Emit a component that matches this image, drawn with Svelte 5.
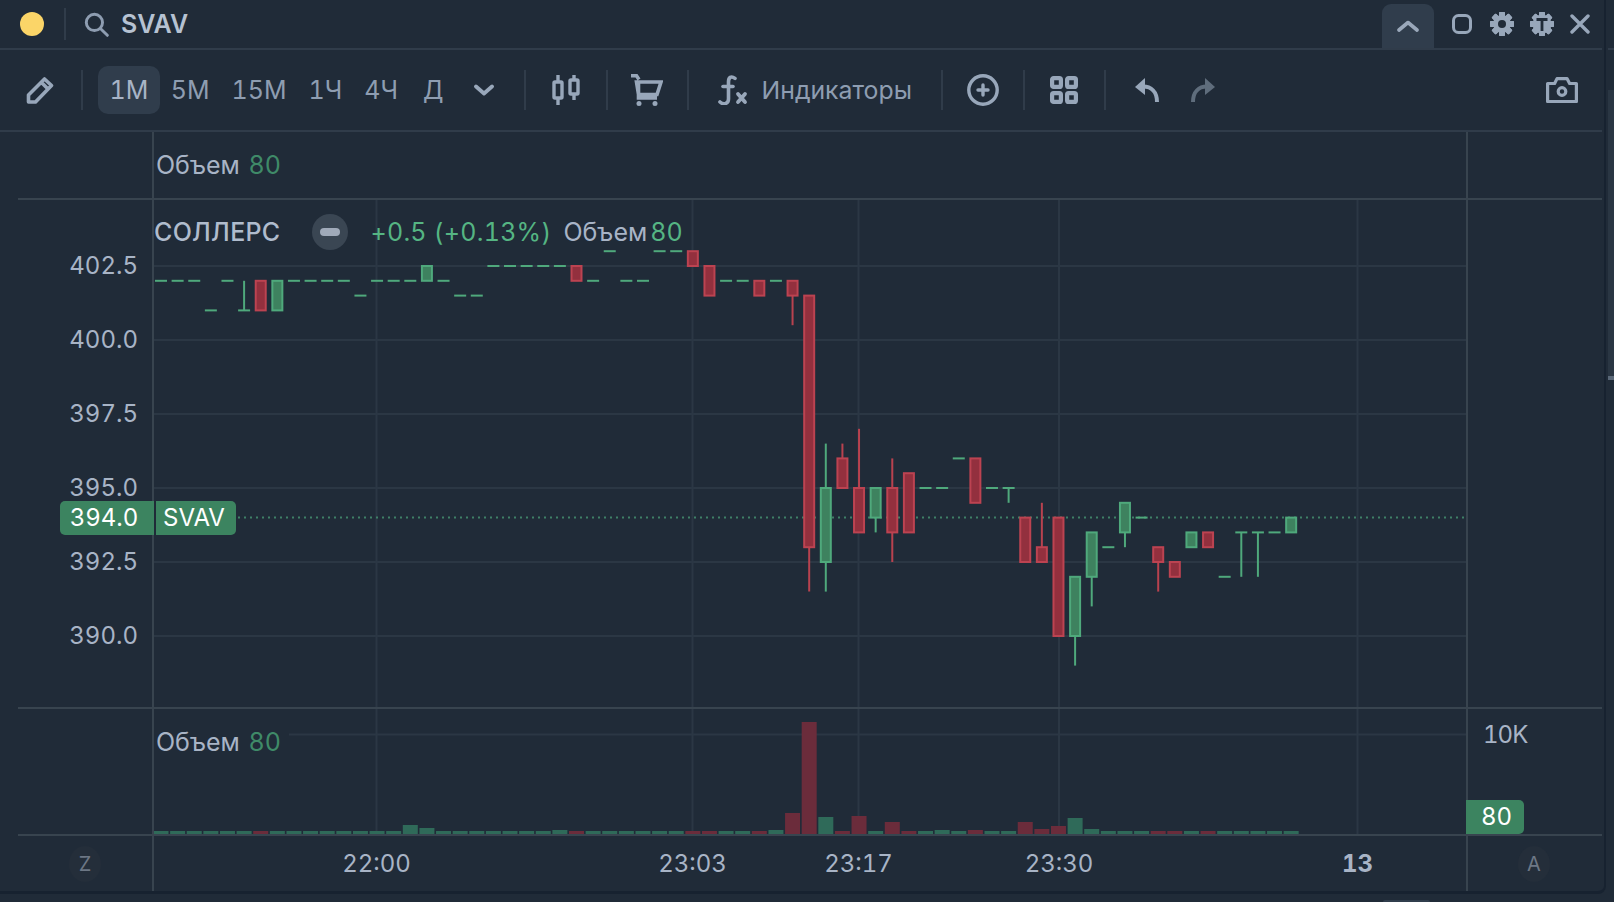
<script lang="ts">
	const TF = ['5М', '15М', '1Ч', '4Ч', 'Д'];

	// price scale: 395 sits on y=488 of the page, main pane starts at 200
	const PANE_TOP = 200;
	const yOf = (p: number) => 488 + (395 - p) * 29.6 - PANE_TOP;
	const xOf = (k: number) => 7 + k * 16.62;

	const gridPrices = [402.5, 400, 397.5, 395, 392.5, 390];
	const gridTimes = [
		{ x: 222.5, label: '22:00' },
		{ x: 538.5, label: '23:03' },
		{ x: 704.5, label: '23:17' },
		{ x: 905, label: '23:30' },
		{ x: 1203.5, label: '13', bold: true }
	];

	// [index, open, close, high, low]; open == close is a dash
	const candles: number[][] = [
		[0, 402, 402], [1, 402, 402], [2, 402, 402], [3, 401, 401], [4, 402, 402],
		[5, 401, 401, 402, 401], [6, 402, 401], [7, 401, 402], [8, 402, 402], [9, 402, 402],
		[10, 402, 402], [11, 402, 402], [12, 401.5, 401.5], [13, 402, 402], [14, 402, 402],
		[15, 402, 402], [16, 402, 402.5], [17, 402, 402], [18, 401.5, 401.5], [19, 401.5, 401.5],
		[20, 402.5, 402.5], [21, 402.5, 402.5], [22, 402.5, 402.5], [23, 402.5, 402.5], [24, 402.5, 402.5],
		[25, 402.5, 402], [26, 402, 402], [27, 403, 403], [28, 402, 402], [29, 402, 402],
		[30, 403, 403], [31, 403, 403], [32, 403, 402.5], [33, 402.5, 401.5], [34, 402, 402],
		[35, 402, 402], [36, 402, 401.5], [37, 402, 402], [38, 402, 401.5, 402, 400.5],
		[39, 401.5, 393, 401.5, 391.5], [40, 392.5, 395, 396.5, 391.5], [41, 396, 395, 396.5, 395],
		[42, 395, 393.5, 397, 393.5], [43, 394, 395, 395, 393.5], [44, 395, 393.5, 396, 392.5],
		[45, 395.5, 393.5], [46, 395, 395], [47, 395, 395], [48, 396, 396], [49, 396, 394.5],
		[50, 395, 395], [51, 395, 395, 395, 394.5], [52, 394, 392.5], [53, 393, 392.5, 394.5, 392.5],
		[54, 394, 390], [55, 390, 392, 392, 389], [56, 392, 393.5, 393.5, 391], [57, 393, 393],
		[58, 393.5, 394.5, 394.5, 393], [59, 394, 394], [60, 393, 392.5, 393, 391.5], [61, 392.5, 392],
		[62, 393, 393.5], [63, 393.5, 393], [64, 392, 392], [65, 393.5, 393.5, 393.5, 392],
		[66, 393.5, 393.5, 393.5, 392], [67, 393.5, 393.5], [68, 393.5, 394]
	];

	// volume bar tops, page y; everything else is the short stub
	const volTops: Record<number, number> = {
		15: 825, 16: 828, 24: 830, 37: 830, 38: 813, 39: 722, 40: 817, 41: 831, 42: 816, 44: 822,
		47: 830, 49: 830, 52: 822, 53: 829, 54: 826, 55: 818, 56: 829
	};
	const volRed = [6, 25, 32, 33, 36, 38, 39, 41, 42, 44, 45, 49, 52, 53, 54, 60, 61, 63];
	const VOL_BASE = 834;
	const VOL_TOP = 709;
	const volumes = Array.from({ length: 69 }, (_, k) => {
		const top = volTops[k] ?? 831;
		return { x: xOf(k) - 7.5, y: top - VOL_TOP, h: VOL_BASE - top, red: volRed.includes(k) };
	});

	const teeth = [0, 45, 90, 135, 180, 225, 270, 315];
</script>

<div class="panel">
	<header class="topbar">
		<span class="dot"></span>
		<span class="vsep"></span>
		<svg class="search" viewBox="0 0 24 24" width="25" height="25" fill="none" stroke="#8e9db1" stroke-width="2.8" stroke-linecap="round">
			<circle cx="10" cy="10" r="7.8" />
			<path d="M16 16l6.4 6.4" />
		</svg>
		<span class="ticker">SVAV</span>
		<span class="collapse">
			<svg viewBox="0 0 22 12" width="22" height="12" fill="none" stroke="#9aa8ba" stroke-width="3.6" stroke-linecap="round" stroke-linejoin="round"><path d="M2 10l9-7.5L20 10" /></svg>
		</span>
		<svg class="square" viewBox="0 0 20 20" width="20" height="20" fill="none" stroke="#98a7ba" stroke-width="3"><rect x="1.5" y="1.500" width="17" height="17" rx="5" /></svg>
		<svg class="gear" viewBox="0 0 24 24" width="24" height="24">
			{#each teeth as a}
				<rect x="9" y="0" width="6" height="24" rx="1" fill="#98a7ba" transform="rotate({a} 12 12)" />
			{/each}
			<circle cx="12" cy="12" r="6.400" fill="none" stroke="#98a7ba" stroke-width="5" />
			<circle cx="12" cy="12" r="4" fill="#202b38" />
		</svg>
		<svg class="bug" viewBox="0 0 24 24" width="24" height="24">
			{#each teeth as a}
				<rect x="9" y="0" width="6" height="24" rx="1" fill="#98a7ba" transform="rotate({a} 12 12)" />
			{/each}
			<circle cx="12" cy="12" r="9.500" fill="#98a7ba" />
			<path d="M6.500 7.500h11M12 7.500V19" fill="none" stroke="#202b38" stroke-width="2.800" />
		</svg>
		<svg class="close" viewBox="0 0 20 20" width="20" height="20" fill="none" stroke="#98a7ba" stroke-width="3.4" stroke-linecap="round"><path d="M2 2l16 16M18 2L2 18" /></svg>
	</header>

	<nav class="toolbar">
		<svg class="pencil" viewBox="0 0 28 28" width="28" height="28" fill="none" stroke="#98a7ba" stroke-width="3.600" stroke-linejoin="round"><path d="M2.500 26v-7L18.500 3l7 6.500L9.500 26zM15.500 6.500l6.500 6.500" /></svg>
		<span class="vsep tall s1"></span>
		<button class="tf active">1М</button>
		{#each TF as t}
			<button class="tf">{t}</button>
		{/each}
		<svg class="chev" viewBox="0 0 20 12" width="20" height="12" fill="none" stroke="#98a7ba" stroke-width="3.800" stroke-linecap="round" stroke-linejoin="round"><path d="M2 2.500l8 7 8-7" /></svg>
		<span class="vsep tall s2"></span>
		<svg class="cndl" viewBox="0 0 28 30" width="28" height="30" fill="none" stroke="#98a7ba" stroke-width="3.400"><path d="M6 0v7M6 23v7M22 0v5M22 19v6" /><rect x="2" y="7" width="8" height="16" rx="1" /><rect x="18" y="5" width="8" height="14" rx="1" /></svg>
		<span class="vsep tall s3"></span>
		<svg class="cart" viewBox="0 0 32 32" width="32" height="32" fill="none" stroke="#98a7ba" stroke-width="3.600"><path d="M0 1.800h5.500L8 5.500M5.500 8H30l-4 12.500H7.500zM7.500 8v16H26" /><circle cx="8" cy="29.500" r="2.500" fill="#98a7ba" stroke="none" /><circle cx="24" cy="29.500" r="2.500" fill="#98a7ba" stroke="none" /></svg>
		<span class="vsep tall s4"></span>
		<svg class="fx" viewBox="0 0 30 30" width="30" height="30" fill="none" stroke="#98a7ba" stroke-width="3.600" stroke-linecap="round"><path d="M17 3.400C13 .4 10.500 2.500 10.500 7v17c0 4.400-4.500 6.500-8.500 3" /><path d="M5 11.500h10" /><path d="M20 19l7 8M27 19l-7 8" stroke-width="3.800" /></svg>
		<span class="indicators">Индикаторы</span>
		<span class="vsep tall s5"></span>
		<svg class="plus" viewBox="0 0 32 32" width="32" height="32" fill="none" stroke="#98a7ba" stroke-width="3.400"><circle cx="16" cy="16" r="14.200" /><path d="M16 11v10M11 16h10" stroke-linecap="round" /></svg>
		<span class="vsep tall s6"></span>
		<svg class="tiles" viewBox="0 0 28 28" width="28" height="28" fill="none" stroke="#98a7ba" stroke-width="4.200"><rect x="2.100" y="2.100" width="8.800" height="8.800" rx="1.500" /><rect x="17.100" y="2.100" width="8.800" height="8.800" rx="1.500" /><rect x="2.100" y="17.100" width="8.800" height="8.800" rx="1.500" /><rect x="17.100" y="17.100" width="8.800" height="8.800" rx="1.500" /></svg>
		<span class="vsep tall s7"></span>
		<svg class="undo" viewBox="0 0 24 24" width="24" height="24"><path d="M10 0L0 9l10 8z" fill="#98a7ba" /><path d="M8 8.500c8 0 14 5 14 15.500" fill="none" stroke="#98a7ba" stroke-width="4" /></svg>
		<svg class="redo" viewBox="0 0 24 24" width="24" height="24"><path d="M14 0l10 9-10 8z" fill="#5f6d7c" /><path d="M16 8.500c-8 0-14 5-14 15.500" fill="none" stroke="#5f6d7c" stroke-width="4" /></svg>
		<svg class="camera" viewBox="0 0 32 26" width="32" height="26" fill="none" stroke="#98a7ba" stroke-width="3.200" stroke-linejoin="round"><path d="M1.600 6.500h7L11 1.600h10l2.600 4.900h6.800v18H1.600z" /><circle cx="16" cy="14.500" r="3.800" /></svg>
	</nav>

	<section class="pane head">
		<div class="side"></div>
		<div class="legend"><span>Объем</span> <em class="dim">80</em></div>
	</section>

	<section class="pane main">
		<div class="side">
			{#each gridPrices as p}
				<span class="price" style="top:{yOf(p)}px">{p.toFixed(1)}</span>
			{/each}
		</div>
		<div class="plot">
			<svg class="canvas" width="1312" height="507">
				{#each gridPrices as p}
					<line class="grid" x1="0" x2="1312" y1={yOf(p)} y2={yOf(p)} />
				{/each}
				{#each gridTimes as t}
					<line class="grid" x1={t.x} x2={t.x} y1="0" y2="507" />
				{/each}
				<line class="last" x1="84" x2="1310" y1={yOf(394)} y2={yOf(394)} />
				{#each candles as c}
					{@const up = c[2] >= c[1]}
					{@const x = xOf(c[0])}
					{#if c.length > 3}
						<line class={up ? 'wick up' : 'wick down'} x1={x} x2={x} y1={yOf(c[3])} y2={yOf(c[4])} />
					{/if}
					{#if c[1] === c[2]}
						<line class="dash" x1={x - 6} x2={x + 6} y1={yOf(c[1])} y2={yOf(c[1])} />
					{:else}
						<rect
							class={up ? 'body up' : 'body down'}
							x={x - 5}
							y={yOf(Math.max(c[1], c[2]))}
							width="10"
							height={yOf(Math.min(c[1], c[2])) - yOf(Math.max(c[1], c[2]))}
						/>
					{/if}
				{/each}
			</svg>
			<div class="legend main-legend">
				<span class="name">СОЛЛЕРС</span>
				<span class="minus"><i></i></span>
				<span class="change">+0.5 (+0.13%)</span>
				<span class="vol">Объем</span>
				<em>80</em>
			</div>
			<span class="symtag">SVAV</span>
		</div>
		<span class="pricetag">394.0</span>
	</section>

	<section class="pane volume">
		<div class="side"></div>
		<div class="plot">
			<svg class="canvas" width="1312" height="125">
				<line class="grid" x1="0" x2="1312" y1="25.500" y2="25.500" />
				{#each gridTimes as t}
					<line class="grid" x1={t.x} x2={t.x} y1="0" y2="125" />
				{/each}
				{#each volumes as v}
					<rect class={v.red ? 'bar red' : 'bar green'} x={v.x} y={v.y} width="15" height={v.h} />
				{/each}
			</svg>
			<div class="legend vol-legend"><span>Объем</span> <em class="dim">80</em></div>
		</div>
		<div class="scale">
			<span class="tenk">10K</span>
			<span class="voltag">80</span>
		</div>
	</section>

	<footer class="axis">
		<div class="corner"><span class="mode">Z</span></div>
		<div class="times">
			{#each gridTimes as t}
				<span class:bold={t.bold} style="left:{t.x}px">{t.label}</span>
			{/each}
		</div>
		<div class="corner right"><span class="mode">A</span></div>
	</footer>
</div>

<!-- neighbouring panel peeking in at the right and bottom edges -->
<div class="edge">
	<i class="e-top"></i>
	<i class="e-mid"></i>
	<i class="e-bar"></i>
</div>
<span class="peek"></span>

<style>
	:global(body) {
		margin: 0;
		background: #202b38;
		overflow: hidden;
	}

	.panel {
		width: 1606px;
		height: 894px;
		box-sizing: border-box;
		border-right: 2px solid #172230;
		border-bottom: 3px solid #172230;
		border-bottom-right-radius: 8px;
		font-family: Inter, 'Noto Sans', sans-serif;
		font-variant-numeric: tabular-nums;
		color: #a8b4c6;
		display: flex;
		flex-direction: column;
	}

	.topbar {
		height: 48px;
		flex: none;
		margin-right: 2px;
		border-bottom: 2px solid #303c4a;
		display: flex;
		align-items: center;
	}

	.dot {
		width: 24px;
		height: 24px;
		border-radius: 50%;
		background: #fbd568;
		margin-left: 20px;
	}

	.vsep {
		width: 2px;
		height: 32px;
		background: #303c4a;
		margin-left: 20px;
		flex: none;
	}

	.search {
		margin-left: 18px;
	}

	.ticker {
		margin-left: 12px;
		font-size: 25px;
		font-weight: 600;
		color: #b6c2d2;
	}

	.collapse {
		margin-left: auto;
		width: 52px;
		height: 44px;
		margin-top: 4px;
		background: #303d4c;
		border-radius: 9px 9px 0 0;
		display: flex;
		align-items: center;
		justify-content: center;
	}

	.square { margin-left: 18px; }
	.gear { margin-left: 18px; }
	.bug { margin-left: 16px; }
	.close { margin-left: 16px; margin-right: 12px; }

	.toolbar {
		height: 80px;
		flex: none;
		margin-right: 2px;
		border-bottom: 2px solid #303c4a;
		display: flex;
		align-items: center;
		color: #8e9db1;
	}

	.tall {
		height: 40px;
		margin-left: 0;
	}

	.pencil { margin-left: 26px; }
	.s1 { margin-left: 27px; }

	.tf {
		all: unset;
		font-size: 25px;
		height: 48px;
		line-height: 48px;
		padding: 0 11px;
		border-radius: 10px;
		color: #8e9db1;
	}

	.tf.active {
		background: #303d4c;
		color: #a8b4c6;
		margin-left: 15px;
		padding: 0 11.5px;
	}

	.tf:last-of-type {
		margin-left: 3px;
	}

	.chev { margin-left: 19px; }
	.s2 { margin-left: 30px; }
	.cndl { margin-left: 26px; }
	.s3 { margin-left: 26px; }
	.cart { margin-left: 23px; }
	.s4 { margin-left: 24px; }
	.fx { margin-left: 29px; }

	.indicators {
		margin-left: 14px;
		font-size: 24.8px;
		width: 179px;
	}

	.s5 { margin-left: 0; }
	.plus { margin-left: 24px; }
	.s6 { margin-left: 24px; }
	.tiles { margin-left: 25px; }
	.s7 { margin-left: 26px; }
	.undo { margin-left: 29px; }
	.redo { margin-left: 32px; }
	.camera { margin-left: auto; margin-right: 24px; }

	.pane {
		display: grid;
		grid-template-columns: 136px 1314px 1fr;
		margin-left: 18px;
		margin-right: 2px;
		position: relative;
		border-bottom: 2px solid #38444f;
		flex: none;
	}

	.head { height: 66px; }
	.main { height: 507px; }
	.volume { height: 125px; }

	.side {
		position: relative;
		border-right: 2px solid #38444f;
	}

	.head::after {
		content: '';
		position: absolute;
		left: 1448px;
		top: 0;
		bottom: 0;
		width: 2px;
		background: #38444f;
	}

	.legend {
		font-size: 25px;
		line-height: 30px;
	}

	.legend em {
		font-style: normal;
		color: #55b583;
	}

	.legend em.dim {
		color: #3f8a68;
		margin-left: 2px;
	}

	.head .legend {
		padding: 18px 0 0 2px;
		white-space: nowrap;
	}

	.plot {
		position: relative;
		box-sizing: border-box;
		border-right: 2px solid #38444f;
		width: 1314px;
	}

	.canvas {
		display: block;
	}

	.grid {
		stroke: #2b3744;
		stroke-width: 2;
	}

	.last {
		stroke: #3f8067;
		stroke-width: 2;
		stroke-dasharray: 2 4;
	}

	.dash {
		stroke: #4fa97c;
		stroke-width: 2;
	}

	.wick {
		stroke-width: 2;
	}

	.wick.up { stroke: #4fa97c; }
	.wick.down { stroke: #b8424f; }

	.body {
		stroke-width: 2;
	}

	.body.up {
		fill: #3e825f;
		stroke: #4fa97c;
	}

	.body.down {
		fill: #93303e;
		stroke: #bc4351;
	}

	.bar.green { fill: #2f6a59; }
	.bar.red { fill: #6b2c3b; }

	.price {
		position: absolute;
		right: 14px;
		font-size: 24px;
		line-height: 30px;
		transform: translateY(-15px);
	}

	.main-legend {
		position: absolute;
		left: 0;
		top: 14px;
		display: flex;
		align-items: center;
		white-space: nowrap;
	}

	.name {
		font-weight: 500;
		color: #b0bccd;
		letter-spacing: 0.3px;
	}

	.minus {
		width: 36px;
		height: 36px;
		border-radius: 50%;
		background: #3a4653;
		margin-left: 32px;
		display: flex;
		align-items: center;
		justify-content: center;
	}

	.minus i {
		width: 20px;
		height: 8px;
		border-radius: 4px;
		background: #a0aab9;
	}

	.change {
		margin-left: 22px;
		color: #55b583;
		letter-spacing: 0.25px;
	}

	.vol {
		margin-left: 12px;
	}

	.main-legend em {
		margin-left: 3px;
	}

	.symtag {
		position: absolute;
		left: 2px;
		top: 301px;
		width: 76px;
		padding-right: 4px;
		height: 34px;
		line-height: 34px;
		text-align: center;
		background: #3c8460;
		color: #fff;
		font-size: 24px;
		border-radius: 0 5px 5px 0;
	}

	.pricetag {
		position: absolute;
		left: 42px;
		top: 301px;
		width: 88px;
		padding-right: 6px;
		height: 34px;
		line-height: 34px;
		text-align: center;
		background: #3c8460;
		color: #fff;
		font-size: 24px;
		border-radius: 5px 0 0 5px;
	}

	.vol-legend {
		position: absolute;
		left: 0;
		top: 16px;
		padding: 2px 8px 2px 2px;
		background: #202b38;
		white-space: nowrap;
	}

	.scale {
		position: relative;
	}

	.tenk {
		position: absolute;
		left: 15px;
		top: 11px;
		font-size: 24px;
		line-height: 30px;
		letter-spacing: -1px;
	}

	.voltag {
		position: absolute;
		left: -2px;
		bottom: 0;
		width: 55px;
		padding-left: 3px;
		height: 34px;
		line-height: 34px;
		text-align: center;
		background: #3c8460;
		color: #fff;
		font-size: 24px;
		border-radius: 0 5px 5px 0;
	}

	.axis {
		flex: 1;
		margin-left: 18px;
		margin-right: 2px;
		display: grid;
		grid-template-columns: 136px 1314px 1fr;
		font-size: 24px;
	}

	.corner {
		display: flex;
		align-items: center;
		justify-content: center;
		border-right: 2px solid #38444f;
	}

	.corner.right {
		border-right: none;
		border-left: 2px solid #38444f;
		margin-left: -2px;
		padding-right: 2px;
	}

	.mode {
		width: 32px;
		height: 36px;
		border-radius: 50%;
		background: #242e3a;
		color: #6d7785;
		font-size: 20px;
		line-height: 36px;
		text-align: center;
	}

	.times {
		position: relative;
	}

	.times span {
		position: absolute;
		top: 13px;
		line-height: 30px;
		transform: translateX(-50%);
	}

	.times .bold {
		font-weight: 700;
	}

	.edge {
		position: absolute;
		left: 1608px;
		top: 0;
		width: 6px;
		height: 400px;
	}

	.edge i {
		position: absolute;
		left: 0;
		right: 0;
	}

	.e-top {
		top: 48px;
		height: 2px;
		background: #303c4a;
	}

	.e-mid {
		top: 90px;
		height: 286px;
		background: #2a3643;
	}

	.e-bar {
		top: 376px;
		height: 4px;
		background: #5a6878;
	}

	.peek {
		position: absolute;
		left: 1383px;
		top: 900px;
		width: 47px;
		height: 2px;
		border-radius: 4px 4px 0 0;
		background: #303d4c;
	}
</style>
